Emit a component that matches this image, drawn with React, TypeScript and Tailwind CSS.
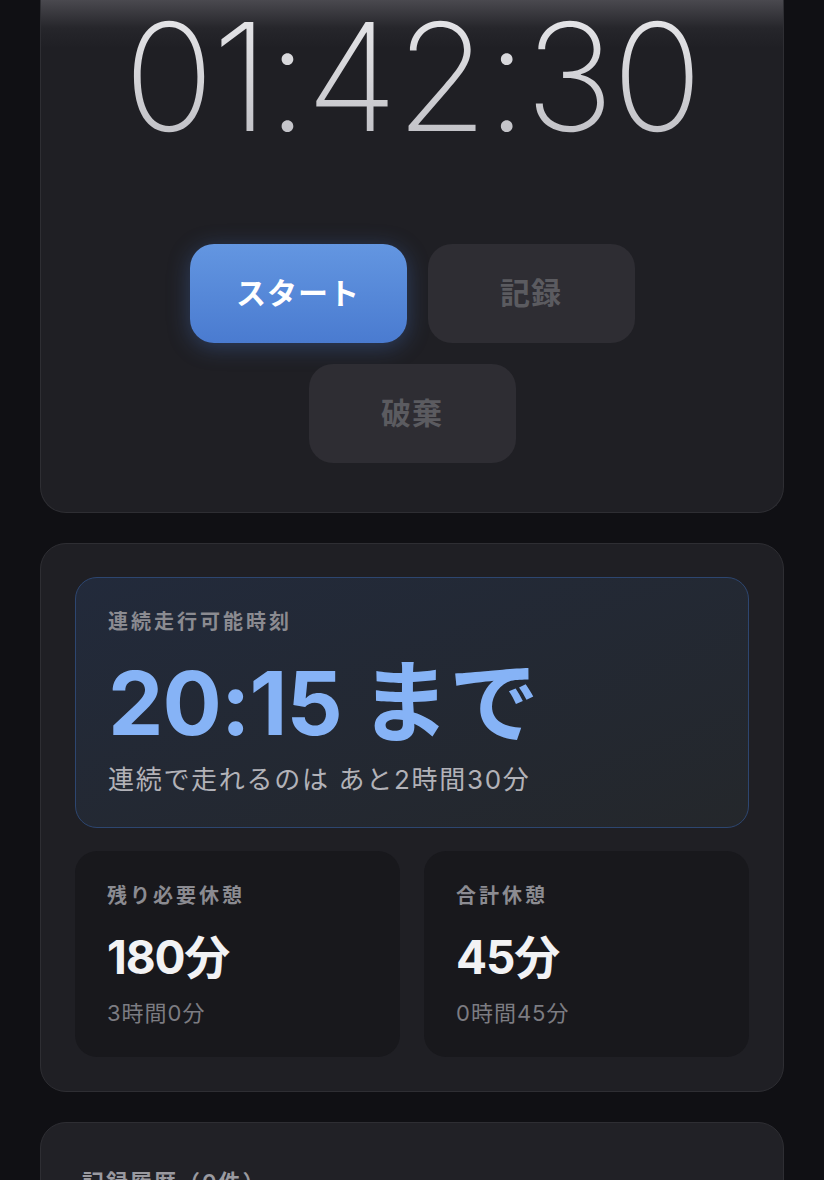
import React from "react";

const jp = "font-['Inter','Noto_Sans_CJK_JP',sans-serif]";

function StatBox({ label, value, sub }: { label: string; value: string; sub: string }) {
  return (
    <div className="flex-1 rounded-[22px] bg-[#18181c] px-[32px] pt-[35px] pb-[33px]">
      <div className="text-[20px] font-semibold leading-none tracking-[3px] text-[#8b8b91]">{label}</div>
      <div className="mt-[28px] text-[46px] font-bold leading-none tracking-tight text-[#f2f2f4]">{value}</div>
      <div className="mt-[22px] text-[22px] leading-none tracking-[1px] text-[#7c7c82]">{sub}</div>
    </div>
  );
}

export default function App() {
  return (
    <div className={`min-h-screen bg-[#101014] px-10 ${jp}`}>
      {/* timer card */}
      <div className="rounded-b-[26px] border border-t-0 border-[#2e2e33] bg-[linear-gradient(to_bottom,#4a494f_0px,#26262b_28px,#1f1f24_48px)] pt-[2px] pb-[49px]">
        <div className="text-center font-['Inter',sans-serif] text-[150px] font-extralight leading-none tracking-[-0.015em]">
          <span className="bg-gradient-to-b from-[#eeeef0] to-[#b9b9bf] bg-clip-text text-transparent">01:42:30</span>
        </div>
        <div className="mx-auto mt-[92px] flex max-w-[450px] flex-wrap justify-center gap-[21px]">
          <button className="h-[99px] w-[217px] rounded-[24px] bg-gradient-to-b from-[#6396e1] to-[#4a7bd0] text-[30px] font-bold tracking-[1px] text-white shadow-[0_4px_22px_rgba(74,123,208,0.35)]">
            スタート
          </button>
          <button className="h-[99px] w-[207px] rounded-[24px] bg-[#2e2d33] text-[30px] font-bold tracking-[1px] text-[#5b5b60]">
            記録
          </button>
          <button className="h-[99px] w-[207px] rounded-[24px] bg-[#2e2d33] text-[30px] font-bold tracking-[1px] text-[#5b5b60]">
            破棄
          </button>
        </div>
      </div>

      {/* status card */}
      <div className="mt-[30px] rounded-[26px] border border-[#2e2e33] bg-[#1f1f24] px-[34px] pt-[33px] pb-[34px]">
        <div className="rounded-[22px] border border-[#2d4670] bg-gradient-to-br from-[#222a3b] to-[#24272b] px-[32px] pt-[34px] pb-[34px]">
          <div className="text-[20px] font-semibold leading-none tracking-[3px] text-[#8b8b91]">連続走行可能時刻</div>
          <div className="mt-[26px] text-[88px] font-bold leading-none tracking-[-0.01em] text-[#86b3f6]">
            20:15<span className="ml-[18px] text-[90px]">まで</span>
          </div>
          <div className="mt-[19px] text-[26px] leading-none tracking-[1.7px] text-[#b2b2b8]">
            連続で走れるのは あと2時間30分
          </div>
        </div>
        <div className="mt-[23px] flex gap-[24px]">
          <StatBox label="残り必要休憩" value="180分" sub="3時間0分" />
          <StatBox label="合計休憩" value="45分" sub="0時間45分" />
        </div>
      </div>

      {/* history card */}
      <div className="mt-[30px] rounded-[26px] border border-[#2e2e33] bg-[#212126] px-[41px] pt-[48px] pb-[40px]">
        <div className="text-[22px] font-semibold leading-none tracking-[2px] text-[#9a9aa0]">記録履歴（0件）</div>
        <div className="mt-6 h-[200px]" />
      </div>
    </div>
  );
}
